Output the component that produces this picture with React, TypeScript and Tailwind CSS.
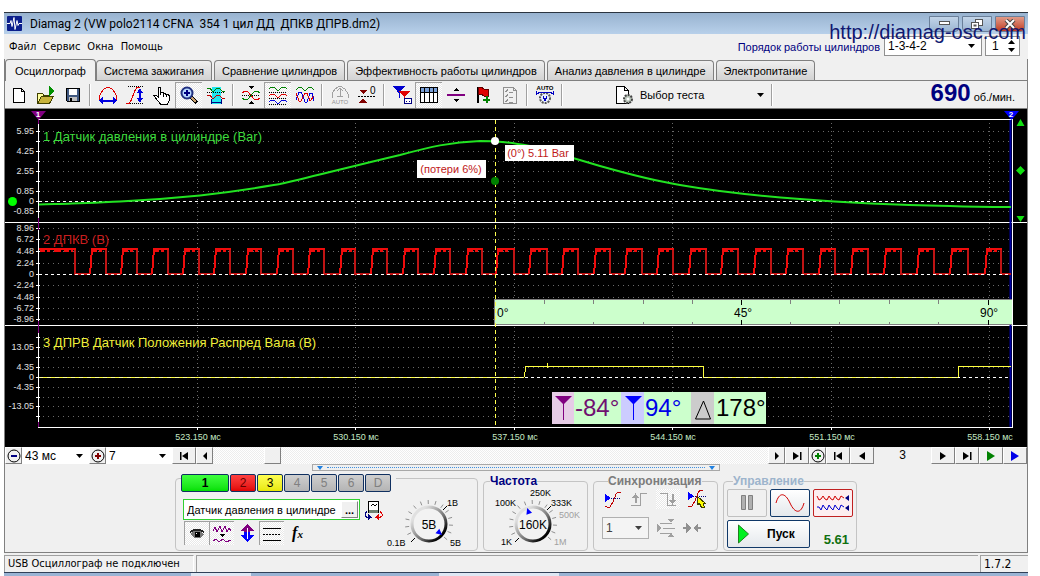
import { useState } from "react";
import type { ReactNode } from "react";
import clsx from "clsx";

const TABS = [
  "Осциллограф",
  "Система зажигания",
  "Сравнение цилиндров",
  "Эффективность работы цилиндров",
  "Анализ давления в цилиндре",
  "Электропитание",
];

const CHANNELS = [
  { name: "1", style: "w-12 bg-linear-to-b from-[#3dff3d] to-[#00e000] font-bold text-black" },
  { name: "2", style: "w-[26px] bg-linear-to-b from-[#ff4040] to-[#e00000] text-[#600]" },
  { name: "3", style: "w-[26px] bg-linear-to-b from-[#ffff50] to-[#e8e800] text-black" },
  { name: "4", style: "w-[26px] bg-linear-to-b from-[#cfcfcf] to-[#b4b4b4] text-[#808080]" },
  { name: "5", style: "w-[26px] bg-linear-to-b from-[#cfcfcf] to-[#b4b4b4] text-[#808080]" },
  { name: "6", style: "w-[26px] bg-linear-to-b from-[#cfcfcf] to-[#b4b4b4] text-[#808080]" },
  { name: "D", style: "w-[26px] bg-linear-to-b from-[#cfcfcf] to-[#b4b4b4] text-[#808080]" },
];

const CHECKER =
  "bg-[repeating-conic-gradient(#ffffff_0_25%,#e8e8e8_0_50%)] bg-size-[2px_2px]";
const PRESSED =
  "border-t border-l border-[#a0a0a0] bg-[repeating-conic-gradient(#ffffff_0_25%,#e8e8e8_0_50%)] bg-size-[2px_2px]";

/* ---------- small controls ---------- */

function Icon({ children, size = 20 }: { children: ReactNode; size?: number }) {
  return (
    <svg
      width={size}
      height={size}
      viewBox="0 0 20 20"
      fill="none"
      shapeRendering="crispEdges"
      aria-hidden="true"
    >
      {children}
    </svg>
  );
}

function ToolButton({
  label,
  pressed,
  children,
}: {
  label: string;
  pressed?: boolean;
  children: ReactNode;
}) {
  return (
    <button
      type="button"
      aria-label={label}
      title={label}
      className={clsx(
        "flex h-[26px] w-[27px] shrink-0 items-center justify-center",
        pressed && PRESSED,
      )}
    >
      <Icon>{children}</Icon>
    </button>
  );
}

function Separator() {
  return (
    <div className="flex w-2 shrink-0 justify-center">
      <div className="h-[22px] w-0.5 border-l border-[#a0a0a0] bg-white" />
    </div>
  );
}

function Combo({
  label,
  value,
  className,
}: {
  label: string;
  value: string;
  className: string;
}) {
  return (
    <div className={clsx("relative shrink-0", className)}>
      <select
        aria-label={label}
        className="block h-full w-full appearance-none pr-4 pl-[3px] outline-none"
      >
        <option>{value}</option>
      </select>
      <svg
        className="pointer-events-none absolute top-1/2 right-1.5 -translate-y-1/2"
        width="7"
        height="4"
        aria-hidden="true"
      >
        <path d="M0 0h7L3.5 4z" fill="currentColor" />
      </svg>
    </div>
  );
}

function NavButton({
  label,
  children,
  color = "#000",
  wide = true,
}: {
  label: string;
  children: ReactNode;
  color?: string;
  wide?: boolean;
}) {
  return (
    <button
      type="button"
      aria-label={label}
      className={clsx(
        "flex h-[17px] shrink-0 items-center justify-center border border-t-white border-r-[#808080] border-b-[#808080] border-l-white bg-[#f0f0f0]",
        wide ? "w-6" : "w-[17px]",
      )}
    >
      <svg width="14" height="14" viewBox="0 0 14 14" fill={color} aria-hidden="true">
        {children}
      </svg>
    </button>
  );
}

/* ---------- scope screen ---------- */

const TIME_TICKS = [
  { x: 197, text: "523.150 мс" },
  { x: 355, text: "530.150 мс" },
  { x: 514, text: "537.150 мс" },
  { x: 672, text: "544.150 мс" },
  { x: 831, text: "551.150 мс" },
  { x: 989, text: "558.150 мс" },
];

const LEVELS = [
  { y: 131, text: "5.95" },
  { y: 141 },
  { y: 151, text: "4.25" },
  { y: 161 },
  { y: 171, text: "2.55" },
  { y: 181 },
  { y: 191, text: "0.85" },
  { y: 201, text: "0", zero: true },
  { y: 211, text: "-0.85" },
  { y: 228, text: "8.96" },
  { y: 239, text: "6.72" },
  { y: 251, text: "4.48" },
  { y: 263, text: "2.24" },
  { y: 274, text: "0", zero: true },
  { y: 285, text: "-2.24" },
  { y: 297, text: "-4.48" },
  { y: 308, text: "-6.72" },
  { y: 319, text: "-8.96" },
  { y: 337 },
  { y: 347, text: "13.05" },
  { y: 357 },
  { y: 367, text: "4.35" },
  { y: 377, text: "0", zero: true },
  { y: 387, text: "-4.35" },
  { y: 397 },
  { y: 406, text: "-13.05" },
  { y: 416 },
];

// falling and rising edges of the crankshaft sensor signal
const PULSES = [
  [75, 90], [106, 121], [137, 152], [168, 183], [199, 214], [230, 246],
  [261, 277], [293, 308], [324, 340], [355, 371], [387, 403], [418, 434],
  [450, 466], [482, 496], [514, 529], [547, 562], [578, 594], [610, 625],
  [642, 657], [673, 689], [706, 721], [738, 754], [771, 786], [803, 819],
  [835, 851], [868, 884], [901, 917], [934, 950], [968, 985], [1001, 1012],
];

const highs = PULSES.map(([fall], i) => {
  const start = i === 0 ? 39 : PULSES[i - 1][1];
  return `M${start} ${i === 0 ? 249 : 274}L${i === 0 ? 39 : start + 2} 249H${fall + 1}`;
}).join("");
const lows = PULSES.map(([fall, rise]) => `M${fall} 249V274H${Math.min(rise, 1011)}`).join("");
const noise = PULSES.map(([fall], i) => {
  const start = i === 0 ? 40 : PULSES[i - 1][1] + 2;
  return `M${start} 250H${fall - 2}`;
}).join("");

const ANGLE_TICKS = [544, 593, 643, 692, 741, 790, 839, 889, 938, 988];

function Scope() {
  return (
    <svg
      className="block w-full bg-black font-['Liberation_Sans',Arial,sans-serif]"
      viewBox="5 109 1022 338"
      role="img"
      aria-label="Осциллограмма"
    >
      {/* grid */}
      <g stroke="#6a6a6a" shapeRendering="crispEdges">
        {LEVELS.filter((l) => !l.zero).map((l) => (
          <path key={l.y} d={`M43 ${l.y}.5H1010`} strokeDasharray="1 4" />
        ))}
        {TIME_TICKS.map((t) => (
          <path key={t.x} d={`M${t.x}.5 123V427`} strokeDasharray="1 3" />
        ))}
      </g>
      <g stroke="#fff" shapeRendering="crispEdges">
        {LEVELS.map((l) => (
          <path key={l.y} d={`M36 ${l.y}.5h4`} />
        ))}
        {LEVELS.filter((l) => l.zero).map((l) => (
          <path key={l.y} d={`M39 ${l.y}.5H1011`} strokeDasharray="3 3" />
        ))}
        <path d="M38 119.5H1012M5 222.5H1027M5 325.5H1027M38 427.5H1013M38.5 119V428M1012.5 119V428" />
        <path d="M197.5 428v2M355.5 428v2M514.5 428v2M672.5 428v2M831.5 428v2M989.5 428v2" />
      </g>
      <path d="M38.5 120v4M38.5 218v12M38.5 321v12M38.5 422v5" stroke="#800080" />
      <path d="M1010.5 120V427" stroke="#0000a0" strokeWidth="2" />

      <g fontSize="9" fill="#e0e0e0" textAnchor="end">
        {LEVELS.filter((l) => l.text).map((l) => (
          <text key={l.y} x="34" y={l.y + 3}>
            {l.text}
          </text>
        ))}
      </g>
      <g fontSize="9" fill="#c4e8c4" textAnchor="middle">
        {TIME_TICKS.map((t) => (
          <text key={t.x} x={t.x + 1} y="440">
            {t.text}
          </text>
        ))}
      </g>

      {/* channel 1, cylinder pressure */}
      <path
        d="M39 204.500C55 204 62 204 72 203.500C95 203 105 202 120 201.500C140 200.500 175 198 200 195.500C240 191 262 187 280 184C320 175 345 168 400 155C430 147 450 142 480 141C500 141 510 142.500 530 146C560 154 575 158.500 600 166C630 174.500 650 180 680 185C720 192 760 196 800 199C850 203 900 205 950 206C975 207 995 207 1011 207"
        fill="none"
        stroke="#22e322"
        strokeWidth="2"
      />
      <circle cx="12.500" cy="201.500" r="4.500" fill="#00ff00" />

      {/* channel 2, crankshaft */}
      <g fill="none" shapeRendering="crispEdges">
        <path d={lows} stroke="#c01414" strokeWidth="2" />
        <path d={highs} stroke="#f00c0c" strokeWidth="2" />
        <path d={noise} stroke="#f00c0c" strokeWidth="4" strokeDasharray="5 2 3 4 7 3" />
        <path d="M39 274.500H1011" stroke="#fff" strokeDasharray="3 3" />
      </g>

      {/* crank angle ruler */}
      <rect x="494" y="299" width="518" height="26" fill="#ccffcc" />
      <g shapeRendering="crispEdges">
        <path d="M494.500 325V299.500H1012M494 324.500H1012" fill="none" stroke="#808080" />
        {ANGLE_TICKS.map((x, i) => (
          <path
            key={x}
            d={i % 5 === 4 ? `M${x}.5 300v5M${x}.5 320v5` : `M${x}.5 300v4M${x}.5 322v3`}
            stroke={i % 5 === 4 ? "#000" : "#808080"}
          />
        ))}
      </g>
      <g fontSize="12" fill="#000">
        <text x="497" y="317">0°</text>
        <text x="734" y="317">45°</text>
        <text x="980" y="317">90°</text>
      </g>

      {/* channel 3, camshaft */}
      <path
        d="M39 377.500H524l2 -11H703.500V377.500H958l1 -11H1011M547.500 363v5"
        fill="none"
        stroke="#ffff40"
        shapeRendering="crispEdges"
      />
      <path d="M39 377.500H524M704 377.500H957" stroke="#fff" strokeDasharray="4 4" opacity="0.5" />

      <path
        d="M495.500 120V427"
        stroke="#ffff50"
        strokeDasharray="4 3"
        shapeRendering="crispEdges"
      />
      <circle cx="495" cy="141" r="4" fill="#fff" />
      <circle cx="495" cy="181" r="4" fill="#008000" />

      <g fontSize="13">
        <text x="43" y="141" fill="#3edc3e">1 Датчик давления в цилиндре (Bar)</text>
        <text x="43" y="244" fill="#c81e1e">2 ДПКВ (В)</text>
        <text x="43" y="347" fill="#f0f03c">3 ДПРВ Датчик Положения Распред Вала (В)</text>
      </g>

      <rect x="417" y="160" width="69" height="18" fill="#fff" />
      <rect x="505" y="145" width="69" height="16" fill="#fff" />
      <g fontSize="11" fill="#c01818" textAnchor="middle">
        <text x="451" y="173">(потери 6%)</text>
        <text x="538" y="157">(0°) 5.11 Bar</text>
      </g>

      {/* cursor markers */}
      <path d="M31 111h15l-7.500 9z" fill="#800080" />
      <path d="M1004 111h15l-7.500 9z" fill="#0000ff" />
      <g fontSize="8" fontWeight="bold" fill="#fff" textAnchor="middle">
        <text x="38" y="117">1</text>
        <text x="1011" y="117">2</text>
      </g>
      <path d="M1020.500 119l4 7h-8zM1020.500 166l4.500 4.500l-4.500 4.500l-4.500 -4.500zM1020.500 222l4 -6h-8z" fill="#10e010" />

      {/* cursor readout */}
      <rect x="552" y="392" width="214" height="32" fill="#ccffcc" />
      <rect x="552" y="392" width="22" height="32" fill="#e6cce6" />
      <rect x="621" y="392" width="23" height="32" fill="#ccccff" />
      <rect x="691" y="392" width="23" height="32" fill="#cccccc" />
      <path d="M555 396h17l-8 8v16h-1v-16z" fill="#800080" />
      <path d="M625 396h17l-8 8v16h-1v-16z" fill="#0000ff" />
      <path d="M703.500 401l7 18h-15z" fill="none" stroke="#000" />
      <g fontSize="24">
        <text x="575" y="416" fill="#701070">-84°</text>
        <text x="645" y="416" fill="#0000e8">94°</text>
        <text x="716" y="416" fill="#000">178°</text>
      </g>
    </svg>
  );
}

/* ---------- knobs ---------- */

type DialLabel = { x: number; y: number; text: string; dim?: boolean };

function Dial({
  id,
  value,
  labels,
  pointer,
}: {
  id: string;
  value: string;
  labels: DialLabel[];
  pointer: number;
}) {
  const ticks = Array.from({ length: 15 }, (_, i) => -225 + i * 19);
  const rad = (deg: number) => (deg * Math.PI) / 180;

  return (
    <svg
      width="94"
      height="62"
      viewBox="0 0 94 62"
      className="shrink-0"
      role="img"
      aria-label={value}
    >
      <defs>
        <linearGradient id={id} x1="0" y1="0" x2="1" y2="1">
          <stop offset="0.2" stopColor="#e0e0e0" />
          <stop offset="0.6" stopColor="#707070" />
          <stop offset="0.85" stopColor="#000" />
        </linearGradient>
      </defs>
      {ticks.map((deg) => (
        <line
          key={deg}
          x1={47 + 20 * Math.cos(rad(deg))}
          y1={37 + 20 * Math.sin(rad(deg))}
          x2={47 + 24 * Math.cos(rad(deg))}
          y2={37 + 24 * Math.sin(rad(deg))}
          stroke="#909090"
        />
      ))}
      <path d="M33 51l-4 4M61 23l4 -4" stroke="#000" />
      <circle cx="47" cy="37" r="17" fill="#f2f2f2" stroke={`url(#${id})`} strokeWidth="3" />
      <path
        d="M17 0l-6 -3v6z"
        fill="#0000ff"
        transform={`translate(47 37) rotate(${pointer})`}
      />
      <text x="47" y="42" fontSize="12" textAnchor="middle">
        {value}
      </text>
      <g fontSize="9">
        {labels.map((l) => (
          <text key={l.text} x={l.x} y={l.y} fill={l.dim ? "#a0a0a0" : "#000"}>
            {l.text}
          </text>
        ))}
      </g>
    </svg>
  );
}

function Group({
  title,
  titleColor,
  className,
  children,
}: {
  title: string;
  titleColor: string;
  className: string;
  children: ReactNode;
}) {
  return (
    <fieldset className={clsx("h-[76px] shrink-0 rounded border border-[#c4c4c4]", className)}>
      <legend className={clsx("ml-1.5 text-[12px] leading-3 font-bold", titleColor)}>{title}</legend>
      {children}
    </fieldset>
  );
}

/* ---------- window parts ---------- */

function TitleBar() {
  const frame =
    "flex h-4 w-[30px] items-center justify-center rounded-b border border-[#6a7f99] bg-linear-to-b";
  return (
    <header className="flex h-[22px] items-center border-t border-[#2b3440] bg-linear-to-b from-[#98b3d0] to-[#b8d0ea] pr-[3px] pl-[3px]">
      <svg width="15" height="15" viewBox="0 0 15 15" aria-hidden="true">
        <rect width="15" height="15" rx="1" fill="#0b1f8c" />
        <path d="M0 7.500h3l1 -3l1 6l2 -9l1 12l2 -9l1 5l1 -2h3" fill="none" stroke="#fff" />
      </svg>
      <h1 className="ml-2 font-[Roboto,sans-serif] text-[12px] whitespace-pre">
        Diamag 2 (VW polo2114 CFNA{"  "}354 1 цил ДД{"  "}ДПКВ ДПРВ.dm2)
      </h1>
      <div className="ml-auto flex gap-[3px]">
        <button type="button" aria-label="Свернуть" className={clsx(frame, "from-[#c2d4e8] to-[#9cb6d2]")}>
          <svg width="11" height="5"><rect x=".5" y=".5" width="10" height="3" fill="#fff" stroke="#555" /></svg>
        </button>
        <button type="button" aria-label="Восстановить" className={clsx(frame, "from-[#c2d4e8] to-[#9cb6d2]")}>
          <svg width="12" height="10" fill="#fff" stroke="#555">
            <rect x="4.500" y=".5" width="7" height="6" />
            <rect x=".5" y="3.500" width="7" height="6" />
            <rect x="3" y="6" width="2" height="1" />
          </svg>
        </button>
        <button type="button" aria-label="Закрыть" className={clsx(frame, "from-[#e09a88] to-[#c03a20]")}>
          <svg width="12" height="10">
            <path d="M2 1l8 8M10 1l-8 8" stroke="#444" strokeWidth="4" />
            <path d="M2 1l8 8M10 1l-8 8" stroke="#fff" strokeWidth="2" />
          </svg>
        </button>
      </div>
    </header>
  );
}

function MenuBar() {
  return (
    <div className="flex h-[25px] items-center pr-2">
      <nav className="flex gap-[7px] pl-[5px] font-['DejaVu_Sans_Condensed','DejaVu_Sans',sans-serif]">
        {["Файл", "Сервис", "Окна", "Помощь"].map((item) => (
          <button key={item} type="button">
            {item}
          </button>
        ))}
      </nav>
      <span className="ml-auto text-[#000080]">Порядок работы цилиндров</span>
      <Combo
        label="Порядок работы цилиндров"
        value="1-3-4-2"
        className="mt-0.5 ml-1 h-5 w-[98px] self-start border border-[#909090] bg-white text-[12px]"
      />
      <div className="mt-0.5 ml-[3px] flex h-5 w-[35px] self-start border border-[#909090] bg-white">
        <input
          aria-label="Номер цилиндра"
          defaultValue="1"
          className="w-[18px] pl-1.5 text-[12px] outline-none"
        />
        <div className="flex flex-1 flex-col items-center justify-center gap-1">
          <button type="button" aria-label="Больше">
            <svg className="block" width="7" height="4"><path d="M0 4h7L3.500 0z" /></svg>
          </button>
          <button type="button" aria-label="Меньше">
            <svg className="block" width="7" height="4"><path d="M0 0h7L3.500 4z" /></svg>
          </button>
        </div>
      </div>
    </div>
  );
}

function Tabs() {
  const [active, setActive] = useState(0);
  return (
    <div role="tablist" className="flex h-[22px] items-end border-b border-[#808080]">
      {TABS.map((tab, i) => (
        <button
          key={tab}
          type="button"
          role="tab"
          aria-selected={i === active}
          onClick={() => setActive(i)}
          className={clsx(
            "shrink-0 rounded-t border border-b-0 border-[#808080] whitespace-nowrap",
            i === active
              ? "-mb-px h-[22px] bg-[#f0f0f0] px-[9px]"
              : "mr-0.5 h-5 bg-linear-to-b from-[#efefef] to-[#d2d2d2] px-[7px]",
          )}
        >
          {tab}
        </button>
      ))}
    </div>
  );
}

function Toolbar() {
  return (
    <div className="flex h-7 items-center border-b border-[#808080]">
      <ToolButton label="Новый">
        <path d="M4.500 3.500h8l3 3v11h-11zM12.500 3.500v3h3" fill="#fff" stroke="#000" />
      </ToolButton>
      <ToolButton label="Открыть">
        <path d="M1.500 18V8.500h5l1 1.500h6v3" fill="#ffffa0" stroke="#404000" />
        <path d="M1.500 18.500l4 -7h12l-4 7z" fill="#c8b43c" stroke="#404000" />
        <path d="M13 1l6 5l-6 5z" fill="#009000" />
      </ToolButton>
      <ToolButton label="Сохранить">
        <path d="M3.500 3.500h13v13h-12l-1 -1z" fill="#405880" stroke="#000" />
        <path d="M6 4h8v6h-8z" fill="#fff" />
        <path d="M6 12h8v4h-8z" fill="#c0c0c0" />
        <path d="M7 13h2v3h-2z" fill="#000" />
      </ToolButton>
      <Separator />
      <ToolButton label="Длительность">
        <path d="M1.500 15V11L3.500 7L6.500 3.500L9 2.500h2L13.500 3.500L16.500 7L18.500 11V15" stroke="#e00000" />
        <path d="M1 15.500l4 -4v3h10v-3l4 4l-4 4v-3H5v3z" fill="#0000e0" />
      </ToolButton>
      <ToolButton label="Амплитуда">
        <path d="M1 18.500h3l2 -3l2 -5l2 -5l2 -3h3" stroke="#e00000" />
        <path d="M3 1.500h16M5 18.500h14" stroke="#000" strokeDasharray="1 1" />
        <path d="M15 3l3 5h-2v5h2l-3 5l-3 -5h2V8h-2z" fill="#0000e0" />
      </ToolButton>
      <ToolButton label="Рука">
        <path
          d="M6.500 2.500h2v7v-2h2.500v1h2.500v1h3l1 2v4l-2 3.500h-7l-5 -6l-2 -3h2.500l2.500 2z"
          fill="#fff"
          stroke="#000"
        />
        <path d="M11 8v4M14 9v3" stroke="#000" />
      </ToolButton>
      <ToolButton label="Увеличить" pressed>
        <path d="M12 12l6 6" stroke="#000" strokeWidth="4" />
        <path d="M12 12l5 5" stroke="#c8a070" strokeWidth="2" />
        <circle cx="8" cy="8" r="5.500" fill="#b8d8ff" stroke="#203080" strokeWidth="2" shapeRendering="auto" />
        <path d="M8 5v6M5 8h6" stroke="#000080" strokeWidth="2" />
      </ToolButton>
      <ToolButton label="Выделение">
        <path d="M6 2h9v17H6z" fill="#20e8f0" />
        <path d="M1 3h3l2 3h2l3 -3h2l3 3h3" stroke="#008000" />
        <path d="M1 7.500h18" stroke="#000" strokeDasharray="1 1" />
        <path d="M1 10h3l2 3h2l3 -3h2l3 3h3" stroke="#c00000" />
        <path d="M5.500 14v5M15.500 14v5M6 17.500h9" stroke="#000080" />
      </ToolButton>
      <Separator />
      <ToolButton label="Совместить">
        <path d="M1 8l3 -2l3 1l6 7l3 1l3 -2" stroke="#e00000" />
        <path d="M1 13l3 2l3 -1l6 -7l3 -1l3 2" stroke="#008000" />
        <path d="M1 10.500h18" stroke="#000" strokeDasharray="1 1" />
        <path d="M7 1h6l-3 3zM7 19h6l-3 -3z" fill="#000" />
      </ToolButton>
      <ToolButton label="Разделить" pressed>
        <path d="M1 4l2 -2h3l3 3h2l3 -3h3l2 2" stroke="#008000" />
        <path d="M1 7.500h18M1 13.500h18M1 19.500h18" stroke="#000" strokeDasharray="1 1" />
        <path d="M1 11l2 -2h3l3 3h2l3 -3h3l2 2" stroke="#e00000" />
        <path d="M1 17l2 -2h3l3 3h2l3 -3h3l2 2" stroke="#0000e0" />
      </ToolButton>
      <ToolButton label="Наложить">
        <path d="M1 5l3 -3h2l4 4l4 -4h2l3 3" stroke="#008000" />
        <path d="M1 15l3 -8h2l3 7l1 3h2l3 -9h2l2 8" stroke="#0000e0" />
        <path d="M1 8l3 8h2l4 -8h2l3 8l4 -5" stroke="#e00000" />
      </ToolButton>
      <Separator />
      <ToolButton label="Авто">
        <path d="M2 13V9l3 -5l5 -3l5 3l3 5v4" stroke="#a0a0a0" />
        <path d="M10 3v9M7 6l3 -3l3 3M7 11h6" stroke="#a0a0a0" />
        <text x="10" y="19" fontSize="6" textAnchor="middle" fill="#909090">AUTO</text>
      </ToolButton>
      <ToolButton label="Ноль">
        <path d="M2 5h8l-4 4zM2 18h8l-4 -5z" fill="#800000" />
        <path d="M1 11.500h17" stroke="#000" strokeDasharray="2 1" />
        <text x="13" y="9" fontSize="10" fill="#000">0</text>
      </ToolButton>
      <Separator />
      <ToolButton label="Маркеры">
        <path d="M1 1h12L7.500 8v5h-1V8z" fill="#0000d0" />
        <path d="M7 6h11l-5 6v6h-1v-6z" fill="#e00000" />
        <path d="M12.500 13.500h7v5h-7z" fill="#fff" stroke="#000080" />
        <path d="M14 16.500h1M17 16.500h1" stroke="#000080" />
      </ToolButton>
      <ToolButton label="Таблица" pressed>
        <path d="M1.500 2.500h17v15h-17z" fill="#fff" stroke="#000" />
        <path d="M2 3h16v4H2z" fill="#7aa0d8" />
        <path d="M1 7.500h18M5.500 3v14M10 3v14M14.500 3v14" stroke="#000" />
      </ToolButton>
      <ToolButton label="Линейка">
        <path d="M1 9h18v2H1z" fill="#800080" />
        <path d="M7 6h6l-3 -3zM7 14h6l-3 3z" fill="#000" />
      </ToolButton>
      <ToolButton label="Добавить метку">
        <path d="M4.500 2v16" stroke="#000" strokeWidth="2" />
        <path d="M5 3l3 -1l3 2h4v7h-4l-3 -2l-3 1z" fill="#e00000" stroke="#600000" />
        <path d="M13.500 11v7M10 14.500h7" stroke="#008000" strokeWidth="2" />
      </ToolButton>
      <ToolButton label="Отчёт">
        <path d="M3.500 2.500h10l3 3v13h-13zM13.500 2.500v3h3" stroke="#909090" />
        <path d="M5 6l1 1l2 -3M5 11l1 1l2 -3M5 16l1 1l2 -3M9 7h4M9 12h4M9 17h4" stroke="#909090" />
      </ToolButton>
      <Separator />
      <ToolButton label="Автонастройка">
        <text x="10" y="5" fontSize="6" fontWeight="bold" textAnchor="middle" fill="#000">AUTO</text>
        <circle cx="10" cy="13" r="5" fill="#e8f0ff" stroke="#555" strokeWidth="2" strokeDasharray="2 1" shapeRendering="auto" />
        <path d="M8 11l2 5l2 -5" stroke="#0000c0" />
        <path d="M2 9l3 -2h10l3 2M1.500 6v4M18.500 6v4" stroke="#0000c0" />
      </ToolButton>
      <Separator />
      <button type="button" className="ml-12 flex h-full w-[150px] items-center">
        <Icon>
          <path d="M2.500 1.500h8l4 4v13h-12zM10.500 1.500v4h4" fill="#fff" stroke="#000" />
          <circle cx="14" cy="14" r="4" fill="#b8c4b8" stroke="#444" strokeWidth="2" strokeDasharray="2 1" shapeRendering="auto" />
          <circle cx="14" cy="14" r="1.500" fill="#fff" shapeRendering="auto" />
        </Icon>
        <span className="ml-1.5">Выбор теста</span>
        <svg className="ml-auto" width="7" height="4" aria-hidden="true">
          <path d="M0 0h7L3.500 4z" />
        </svg>
      </button>
      <div className="ml-1">
        <Separator />
      </div>
      <p className="mr-3 ml-auto flex items-baseline gap-[3px] leading-6">
        <strong className="text-[24px] text-[#000080]">690</strong>
        об./мин.
      </p>
    </div>
  );
}

function ScrollRow() {
  const left = "M10 3v8l-6 -4z";
  const right = "M4 3v8l6 -4z";
  return (
    <div className="flex h-[17px] text-[12px]">
      <NavButton label="Сжать" wide={false}>
        <circle cx="7" cy="7" r="6" fill="none" stroke="#000" />
        <path d="M4 6h6v2H4z" fill="#000080" />
      </NavButton>
      <Combo label="Развёртка" value="43 мс" className="w-[67px] bg-white" />
      <NavButton label="Растянуть" wide={false}>
        <circle cx="7" cy="7" r="6" fill="none" stroke="#000" />
        <path d="M4 6h2V4h2v2h2v2h-2v2h-2v-2h-2z" fill="#800000" />
      </NavButton>
      <Combo label="Масштаб" value="7" className="w-[66px] bg-white" />
      <NavButton label="В начало">
        <path d="M11 3v8l-6 -4zM3 3h1.500v8H3z" />
      </NavButton>
      <NavButton label="Назад" wide={false}>
        <path d="M9 3v8l-4 -4z" />
      </NavButton>
      <div className="flex flex-1 bg-[repeating-conic-gradient(#ffffff_0_25%,#ededed_0_50%)] bg-size-[2px_2px] pl-[5%]">
        <NavButton label="Ползунок" wide={false}>
          <path d="M0 0" />
        </NavButton>
      </div>
      <NavButton label="Вперёд" wide={false}>
        <path d="M5 3v8l4 -4z" />
      </NavButton>
      <NavButton label="В конец">
        <path d="M3 3v8l6 -4zM10 3h1.500v8H10z" />
      </NavButton>
      <NavButton label="Добавить кадр" wide={false}>
        <circle cx="7" cy="7" r="6" fill="none" stroke="#000" />
        <path d="M4 6h2V4h2v2h2v2h-2v2h-2v-2h-2z" fill="#008000" />
      </NavButton>
      <NavButton label="Первый кадр">
        <path d="M11 3v8l-6 -4zM3 3h1.500v8H3z" />
      </NavButton>
      <NavButton label="Предыдущий кадр">
        <path d={left} />
      </NavButton>
      <output className="w-[57px] shrink-0 text-center leading-[17px]">3</output>
      <NavButton label="Следующий кадр">
        <path d={right} />
      </NavButton>
      <NavButton label="Последний кадр">
        <path d="M3 3v8l6 -4zM10 3h1.500v8H10z" />
      </NavButton>
      <NavButton label="Воспроизвести" color="#008000">
        <path d="M3 2v10l8 -5z" />
      </NavButton>
      <NavButton label="Воспроизвести всё" color="#0000e8">
        <path d="M3 2v10l8 -5z" />
      </NavButton>
    </div>
  );
}

function ChannelPanel() {
  return (
    <fieldset
      aria-label="Канал"
      className="mt-[3px] flex h-[73px] w-[303px] shrink-0 rounded border border-[#c4c4c4] pl-[5px]"
    >
      <div className="w-[215px] shrink-0">
        <div className="-mt-[5px] flex gap-px bg-[#f0f0f0] text-[12px]">
          {CHANNELS.map((c) => (
            <button
              key={c.name}
              type="button"
              className={clsx("h-[18px] rounded-xs border border-[#103060] leading-4", c.style)}
            >
              {c.name}
            </button>
          ))}
        </div>
        <div className="mt-[7px] ml-0.5 flex items-center gap-1">
          <div className="flex h-[21px] w-[177px] items-center border border-[#30d030] bg-white">
            <input
              aria-label="Датчик"
              defaultValue="Датчик давления в цилиндре"
              className="w-0 flex-1 pl-[3px] outline-none"
            />
            <button
              type="button"
              aria-label="Выбрать датчик"
              className="mr-px h-[17px] w-[17px] border border-t-white border-r-[#808080] border-b-[#808080] border-l-white bg-[#f0f0f0] leading-[10px] font-bold"
            >
              ...
            </button>
          </div>
          <button type="button" aria-label="Поменять каналы">
            <Icon>
              <path d="M4.500 1.500h10v11h-10z" fill="#fff" stroke="#000" />
              <path d="M5 10h9v3H5z" fill="#708070" />
              <path d="M7 6l2 -2l2 2l2 -2" stroke="#000" />
              <path d="M3 11l-2 3v2l3 2" stroke="#000080" />
              <path d="M16 11l2 3v2l-3 2" stroke="#e00000" />
              <path d="M4 14l4 3.500l-4 2.500z" fill="#000080" />
              <path d="M15 14l-4 3.500l4 2.500z" fill="#e00000" />
            </Icon>
          </button>
        </div>
        <div className="mt-px ml-[3px] flex">
          <button type="button" aria-label="Показать" className={clsx("flex h-6 w-[25px] items-center justify-center", PRESSED)}>
            <Icon>
              <path d="M3 10l4 -3h6l4 3l-3 4H7z" fill="#777" />
              <path d="M3 8l4 -2h6l4 2" stroke="#222" strokeWidth="2" />
              <path d="M8 8h5v5H8z" fill="#000" />
              <path d="M9 9h1v1H9z" fill="#fff" />
            </Icon>
          </button>
          <button type="button" aria-label="Фильтр" className={clsx("flex h-6 w-[25px] items-center justify-center", PRESSED)}>
            <Icon>
              <path d="M1 7l2 -4l2 5l3 -6l2 6l3 -6l2 6l2 -4l2 3M1 17l3 -2l3 3l4 -3l3 3l5 -2" stroke="#800080" />
              <path d="M7 10h6l-3 3z" fill="#000" />
            </Icon>
          </button>
          <button type="button" aria-label="Инвертировать" className="flex h-6 w-[25px] items-center justify-center">
            <Icon>
              <path d="M10 1l7 7h-4v3H7V8H3z" fill="#800080" />
              <path d="M10 19l7 -7h-4V9H7v3H3z" fill="#0000ff" />
              <path d="M10 5v11" stroke="#fff" />
            </Icon>
          </button>
          <button type="button" aria-label="Уровни" className={clsx("flex h-6 w-[25px] items-center justify-center", PRESSED)}>
            <Icon>
              <path d="M1 4.500h18M1 16.500h18" stroke="#000" />
              <path d="M1 10.500h18" stroke="#000" strokeDasharray="2 1" />
            </Icon>
          </button>
          <button type="button" className="w-[27px] font-['Liberation_Serif',serif] text-[16px] leading-5 font-bold italic">
            f<span className="text-[11px]">x</span>
          </button>
        </div>
      </div>
      <div className="mt-2 -ml-3.5">
        <Dial
          id="volt-ring"
          value="5В"
          pointer={40}
          labels={[
            { x: 65, y: 19, text: "1В" },
            { x: 5, y: 59, text: "0.1В" },
            { x: 68, y: 59, text: "5В" },
          ]}
        />
      </div>
    </fieldset>
  );
}

function SyncPanel() {
  return (
    <Group title="Синхронизация" titleColor="text-[#7c7c7c]" className="w-[125px] px-2">
      <div className="mt-0.5 flex items-center justify-between pr-0.5">
        <button type="button" aria-label="Источник">
          <Icon>
            <path d="M3 5v8l6 -4z" fill="#0000ff" />
            <path d="M9 9.500h10" stroke="#000080" strokeDasharray="1 1" />
            <path d="M3 17l2 1h3l3 -5l3 -8l2 -2h3" stroke="#c00000" />
          </Icon>
        </button>
        <button type="button" aria-label="По фронту" disabled>
          <Icon>
            <path d="M2 16.500h9.500V4.500H18" stroke="#a0a0a0" />
            <path d="M6.500 14V7M4 9l2.500 -3L9 9" stroke="#a0a0a0" strokeWidth="2" />
          </Icon>
        </button>
        <button type="button" aria-label="По спаду" disabled className={clsx("px-0.5", CHECKER)}>
          <Icon>
            <path d="M2 4.500h7.500v12H18" stroke="#a0a0a0" />
            <path d="M14.500 5v8M12 11l2.500 3L17 11" stroke="#a0a0a0" strokeWidth="2" />
          </Icon>
        </button>
        <button type="button" aria-label="Автоуровень">
          <Icon>
            <path d="M1 3v8l6 -4z" fill="#0000ff" />
            <path d="M6 7.500h13" stroke="#000080" strokeDasharray="1 1" />
            <path d="M1 17h4l3 -5l3 -8l2 -3h3" stroke="#c00000" />
            <path d="M10.500 7.500v8l2 -1l2 4h3l-1 -4h2z" fill="#ffff00" stroke="#404000" />
          </Icon>
        </button>
      </div>
      <div className="mt-2 flex items-center">
        <Combo
          label="Канал синхронизации"
          value="1"
          className="h-[22px] w-[47px] border border-[#b0b0b0] bg-[#f4f4f4] text-[12px] text-[#404040]"
        />
        <div className="flex flex-1 justify-evenly">
          <Icon>
            <path d="M1 6v8l5 -4z" fill="#a0a0a0" />
            <path d="M4 5.500h12M7 10.500h12M4 15.500h12" stroke="#a0a0a0" />
            <path d="M12 1h6l-3 4zM12 19h6l-3 -4z" fill="#a0a0a0" />
          </Icon>
          <Icon>
            <path d="M1 9h3V5l5 5l-5 5v-4H1zM19 9h-3V5l-5 5l5 5v-4h3z" fill="#909090" />
          </Icon>
        </div>
      </div>
    </Group>
  );
}

function ControlPanel() {
  const box = "flex h-7 w-10 items-center justify-center rounded-xs border";
  return (
    <Group title="Управление" titleColor="text-[#9db4cc]" className="w-[134px] px-[3px]">
      <div className="mt-0.5 flex justify-between">
        <button type="button" aria-label="Пауза" disabled className={clsx(box, "border-[#c0c0c0]")}>
          <svg width="12" height="16" fill="#b0b0b0" stroke="#808080">
            <path d="M.5 .5h4v14h-4zM7.500 .5h4v14h-4z" />
          </svg>
        </button>
        <button type="button" aria-label="Однократно" className={clsx(box, "border-[#103868] bg-linear-to-b from-white to-[#e4e8ec]")}>
          <svg width="30" height="20" fill="none" stroke="#d00000">
            <path d="M1 10C4 -1 10 -1 15 10S26 21 29 10" />
          </svg>
        </button>
        <button type="button" aria-label="Непрерывно" className={clsx(box, "border-[#c02020] bg-[#fdeef0]")}>
          <svg width="34" height="20" fill="none">
            <path d="M1 3l2 4l2 -1l2 -3l2 3l2 1l2 -4l2 3l2 1l2 -4l2 3l2 1l2 -4l3 2" stroke="#d00000" />
            <path d="M1 14h2l2 3l2 -5l2 3l2 2l2 -5l2 3l2 2l2 -5l2 3l2 2l2 -5l3 2" stroke="#0000d0" />
            <path d="M33 2v6l-4 -3zM33 12v6l-4 -3z" fill="#000080" />
          </svg>
        </button>
      </div>
      <div className="mt-[3px] flex items-end justify-between">
        <button
          type="button"
          className="flex h-7 w-[83px] items-center rounded-xs border border-[#103868] bg-linear-to-b from-white to-[#e4e8ec] pl-2.5 text-[12px] font-bold"
        >
          <svg width="11" height="20" aria-hidden="true">
            <path d="M.5 1v18l10 -9z" fill="#00f020" stroke="#208020" />
          </svg>
          <span className="ml-[18px]">Пуск</span>
        </button>
        <output className="pr-1 text-[13px] leading-4 font-bold text-[#107010]">5.61</output>
      </div>
    </Group>
  );
}

export default function App() {
  return (
    <div className="bg-white pt-3 pr-3 pl-1 font-['Liberation_Sans',Arial,sans-serif] text-[11px] leading-4 text-black">
      <main className="relative bg-[#f0f0f0]">
        <TitleBar />
        <a
          href="http://diamag-osc.com"
          className="absolute top-2 right-0.5 z-10 text-[20px] leading-6 text-[#101870]"
        >
          http://diamag-osc.com
        </a>
        <MenuBar />
        <div className="border-x border-[#808080]">
          <Tabs />
          <Toolbar />
          <Scope />
          <ScrollRow />
          <div className="mx-[30%] flex h-[7px] items-center gap-1 border border-[#a8a8a8] px-1">
            <svg width="6" height="4" aria-hidden="true"><path d="M0 0h6L3 4z" fill="#2080e0" /></svg>
            <div className="flex-1 border-t border-dotted border-[#4090e0]" />
            <svg width="6" height="4" aria-hidden="true"><path d="M0 0h6L3 4z" fill="#2080e0" /></svg>
          </div>
          <div className="flex gap-[5px] pt-1 pb-px pl-[170px]">
            <ChannelPanel />
            <Group title="Частота" titleColor="text-[#000080]" className="w-[105px]">
              <div className="ml-0.5">
                <Dial
                  id="freq-ring"
                  value="160K"
                  pointer={-110}
                  labels={[
                    { x: 44, y: 9, text: "250K" },
                    { x: 9, y: 19, text: "100K" },
                    { x: 65, y: 19, text: "333K" },
                    { x: 73, y: 31, text: "500K", dim: true },
                    { x: 15, y: 58, text: "1K" },
                    { x: 68, y: 58, text: "1M", dim: true },
                  ]}
                />
              </div>
            </Group>
            <SyncPanel />
            <ControlPanel />
          </div>
        </div>
        <footer className="flex h-5 gap-0.5 border-t border-[#808080] pt-0.5 font-['DejaVu_Sans_Condensed','DejaVu_Sans',sans-serif]">
          <span className="w-[190px] shrink-0 border-t border-r border-l border-[#a0a0a0] border-r-white pl-[3px]">
            USB Осциллограф не подключен
          </span>
          <span className="flex-1 border-t border-l border-[#a0a0a0]" />
          <span className="w-12 border-t border-l border-[#a0a0a0] pl-[3px] text-[12px]">1.7.2</span>
        </footer>
        <div className="flex h-1 border-t border-[#304058] bg-[#9ab4d4]">
          <div className="ml-[187px] w-[60px] bg-[#dfe8f4]" />
          <div className="ml-[188px] w-[120px] bg-[#dfe8f4]" />
        </div>
      </main>
    </div>
  );
}
